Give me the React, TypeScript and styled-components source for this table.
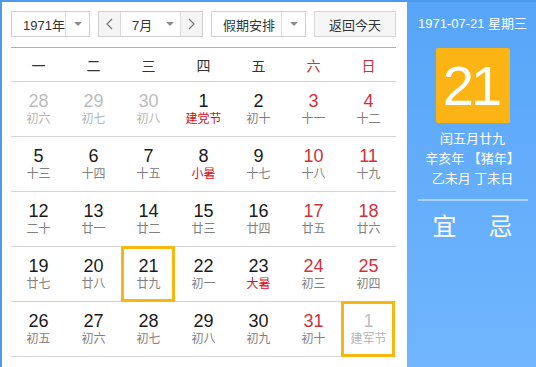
import React from 'react';
import styled, { createGlobalStyle, css } from 'styled-components';

type Tone = 'normal' | 'weekend' | 'faded';

interface Day {
  num: number;
  lunar: string;
  tone?: Tone;
  festival?: boolean;
  selected?: boolean;
}

const weekdays = ['一', '二', '三', '四', '五', '六', '日'];

const weeks: Day[][] = [
  [
    { num: 28, lunar: '初六', tone: 'faded' },
    { num: 29, lunar: '初七', tone: 'faded' },
    { num: 30, lunar: '初八', tone: 'faded' },
    { num: 1, lunar: '建党节', festival: true },
    { num: 2, lunar: '初十' },
    { num: 3, lunar: '十一', tone: 'weekend' },
    { num: 4, lunar: '十二', tone: 'weekend' },
  ],
  [
    { num: 5, lunar: '十三' },
    { num: 6, lunar: '十四' },
    { num: 7, lunar: '十五' },
    { num: 8, lunar: '小暑', festival: true },
    { num: 9, lunar: '十七' },
    { num: 10, lunar: '十八', tone: 'weekend' },
    { num: 11, lunar: '十九', tone: 'weekend' },
  ],
  [
    { num: 12, lunar: '二十' },
    { num: 13, lunar: '廿一' },
    { num: 14, lunar: '廿二' },
    { num: 15, lunar: '廿三' },
    { num: 16, lunar: '廿四' },
    { num: 17, lunar: '廿五', tone: 'weekend' },
    { num: 18, lunar: '廿六', tone: 'weekend' },
  ],
  [
    { num: 19, lunar: '廿七' },
    { num: 20, lunar: '廿八' },
    { num: 21, lunar: '廿九', selected: true },
    { num: 22, lunar: '初一' },
    { num: 23, lunar: '大暑', festival: true },
    { num: 24, lunar: '初三', tone: 'weekend' },
    { num: 25, lunar: '初四', tone: 'weekend' },
  ],
  [
    { num: 26, lunar: '初五' },
    { num: 27, lunar: '初六' },
    { num: 28, lunar: '初七' },
    { num: 29, lunar: '初八' },
    { num: 30, lunar: '初九' },
    { num: 31, lunar: '初十', tone: 'weekend' },
    { num: 1, lunar: '建军节', tone: 'faded', selected: true },
  ],
];

const Chevron: React.FC<{ dir: 'left' | 'right' }> = ({ dir }) => (
  <svg width="7" height="12" viewBox="0 0 7 12">
    <polyline
      points={dir === 'left' ? '6,1 1,6 6,11' : '1,1 6,6 1,11'}
      fill="none"
      stroke="#777"
      strokeWidth="1.2"
    />
  </svg>
);

const Calendar: React.FC = () => {
  return (
    <>
      <GlobalStyle />
      <Widget>
        <Main>
          <Toolbar>
            <Select $width={79}>
              <SelectText>1971年</SelectText>
              <Caret />
            </Select>
            <MonthGroup>
              <StepBtn>
                <Chevron dir="left" />
              </StepBtn>
              <MonthSelect>
                <SelectText>7月</SelectText>
                <Caret $plain />
              </MonthSelect>
              <StepBtn>
                <Chevron dir="right" />
              </StepBtn>
            </MonthGroup>
            <Select $width={95}>
              <SelectText>假期安排</SelectText>
              <Caret />
            </Select>
            <TodayBtn>返回今天</TodayBtn>
          </Toolbar>

          <WeekHeader>
            {weekdays.map((w, i) => (
              <WeekName key={w} $red={i >= 5}>
                {w}
              </WeekName>
            ))}
          </WeekHeader>

          {weeks.map((week, wi) => (
            <WeekRow key={wi}>
              {week.map((d, di) => (
                <DayCell key={di} $selected={d.selected}>
                  <DayNum $tone={d.tone || 'normal'}>{d.num}</DayNum>
                  <Lunar $tone={d.tone || 'normal'} $festival={d.festival}>
                    {d.lunar}
                  </Lunar>
                </DayCell>
              ))}
            </WeekRow>
          ))}
        </Main>

        <Side>
          <FullDate>1971-07-21 星期三</FullDate>
          <BigDay>21</BigDay>
          <LunarInfo>
            <div>闰五月廿九</div>
            <div>辛亥年 【猪年】</div>
            <div>乙未月 丁未日</div>
          </LunarInfo>
          <Divider />
          <YiJi>
            <span>宜</span>
            <span>忌</span>
          </YiJi>
        </Side>
      </Widget>
    </>
  );
};

const GlobalStyle = createGlobalStyle`
  html, body {
    margin: 0;
    overflow: hidden;
    background: #ffffff;
  }
  body {
    font-family: "Liberation Sans", "Noto Sans CJK SC", sans-serif;
  }
`;

const Widget = styled.div`
  display: flex;
  width: 540px;
  box-sizing: border-box;
  border: 2px solid #4d9bf0;
`;

const Main = styled.div`
  width: 405px;
  box-sizing: border-box;
  padding: 9px 11px 14px 9px;
`;

const Toolbar = styled.div`
  display: flex;
  justify-content: space-between;
  height: 26px;
  margin-bottom: 10px;
  font-size: 13px;
  color: #333;
`;

const Select = styled.div<{ $width: number }>`
  display: flex;
  width: ${(p) => p.$width}px;
  box-sizing: border-box;
  border: 1px solid #cfcfcf;
  background: #fff;
`;

const SelectText = styled.div`
  flex: 1;
  display: flex;
  align-items: center;
  padding-left: 11px;
`;

const Caret = styled.div<{ $plain?: boolean }>`
  position: relative;
  width: 23px;
  border-left: ${(p) => (p.$plain ? 'none' : '1px solid #dcdcdc')};
  &::after {
    content: '';
    position: absolute;
    left: 50%;
    top: 50%;
    margin: -2px 0 0 -4px;
    border-left: 4px solid transparent;
    border-right: 4px solid transparent;
    border-top: 4px solid #8c8c8c;
  }
`;

const MonthGroup = styled.div`
  display: flex;
  width: 105px;
  box-sizing: border-box;
  border: 1px solid #cfcfcf;
`;

const StepBtn = styled.div`
  display: flex;
  align-items: center;
  justify-content: center;
  width: 21px;
  background: #f4f4f4;
  & + div {
    border-left: 1px solid #dcdcdc;
  }
`;

const MonthSelect = styled.div`
  display: flex;
  flex: 1;
  border-right: 1px solid #dcdcdc;
  background: #fff;
  ${SelectText} {
    padding-left: 11px;
  }
  ${Caret} {
    width: 20px;
  }
`;

const TodayBtn = styled.div`
  display: flex;
  align-items: center;
  justify-content: center;
  width: 82px;
  box-sizing: border-box;
  border: 1px solid #d8d8d8;
  background: #f6f6f6;
`;

const WeekHeader = styled.div`
  display: grid;
  grid-template-columns: repeat(7, 55px);
  height: 33px;
  border-top: 1px solid #88b6e6;
  border-bottom: 1px solid #d4d4d4;
`;

const WeekName = styled.div<{ $red: boolean }>`
  display: flex;
  align-items: center;
  justify-content: center;
  font-size: 14px;
  color: ${(p) => (p.$red ? '#c8303c' : '#333')};
`;

const WeekRow = styled.div`
  display: grid;
  grid-template-columns: repeat(7, 55px);
  height: 54px;
  border-bottom: 1px solid #d4d4d4;
`;

const DayCell = styled.div<{ $selected?: boolean }>`
  position: relative;
  display: flex;
  flex-direction: column;
  align-items: center;
  padding-top: 9px;
  ${(p) =>
    p.$selected &&
    css`
      &::after {
        content: '';
        position: absolute;
        top: -1px;
        bottom: -1px;
        left: 0;
        right: 1px;
        border: 3px solid #f6b80f;
      }
    `}
`;

const toneColor = {
  normal: '#1a1a1a',
  weekend: '#d0323c',
  faded: '#bdbdbd',
};

const DayNum = styled.div<{ $tone: Tone }>`
  font-size: 18px;
  line-height: 20px;
  color: ${(p) => toneColor[p.$tone]};
`;

const Lunar = styled.div<{ $tone: Tone; $festival?: boolean }>`
  font-size: 12px;
  line-height: 16px;
  color: ${(p) => (p.$festival ? '#d7101c' : p.$tone === 'faded' ? '#b5b5b5' : '#808080')};
`;

const Side = styled.div`
  flex: 1;
  display: flex;
  flex-direction: column;
  align-items: center;
  background: linear-gradient(to bottom, #57a5f8, #71b6fe);
  color: #fff;
`;

const FullDate = styled.div`
  margin-top: 13px;
  font-size: 13px;
  line-height: 18px;
`;

const BigDay = styled.div`
  display: flex;
  align-items: center;
  justify-content: center;
  width: 74px;
  height: 75px;
  margin-top: 15px;
  border-radius: 2px;
  background: #fcb414;
  font-size: 56px;
  letter-spacing: -3px;
  text-indent: -3px;
`;

const LunarInfo = styled.div`
  margin-top: 6px;
  font-size: 13px;
  line-height: 20px;
  text-align: center;
`;

const Divider = styled.div`
  width: 110px;
  height: 2px;
  margin-top: 10px;
  background: rgba(255, 255, 255, 0.45);
`;

const YiJi = styled.div`
  display: flex;
  gap: 32px;
  margin-top: 12px;
  font-size: 24px;
  line-height: 28px;
`;

export default Calendar;
